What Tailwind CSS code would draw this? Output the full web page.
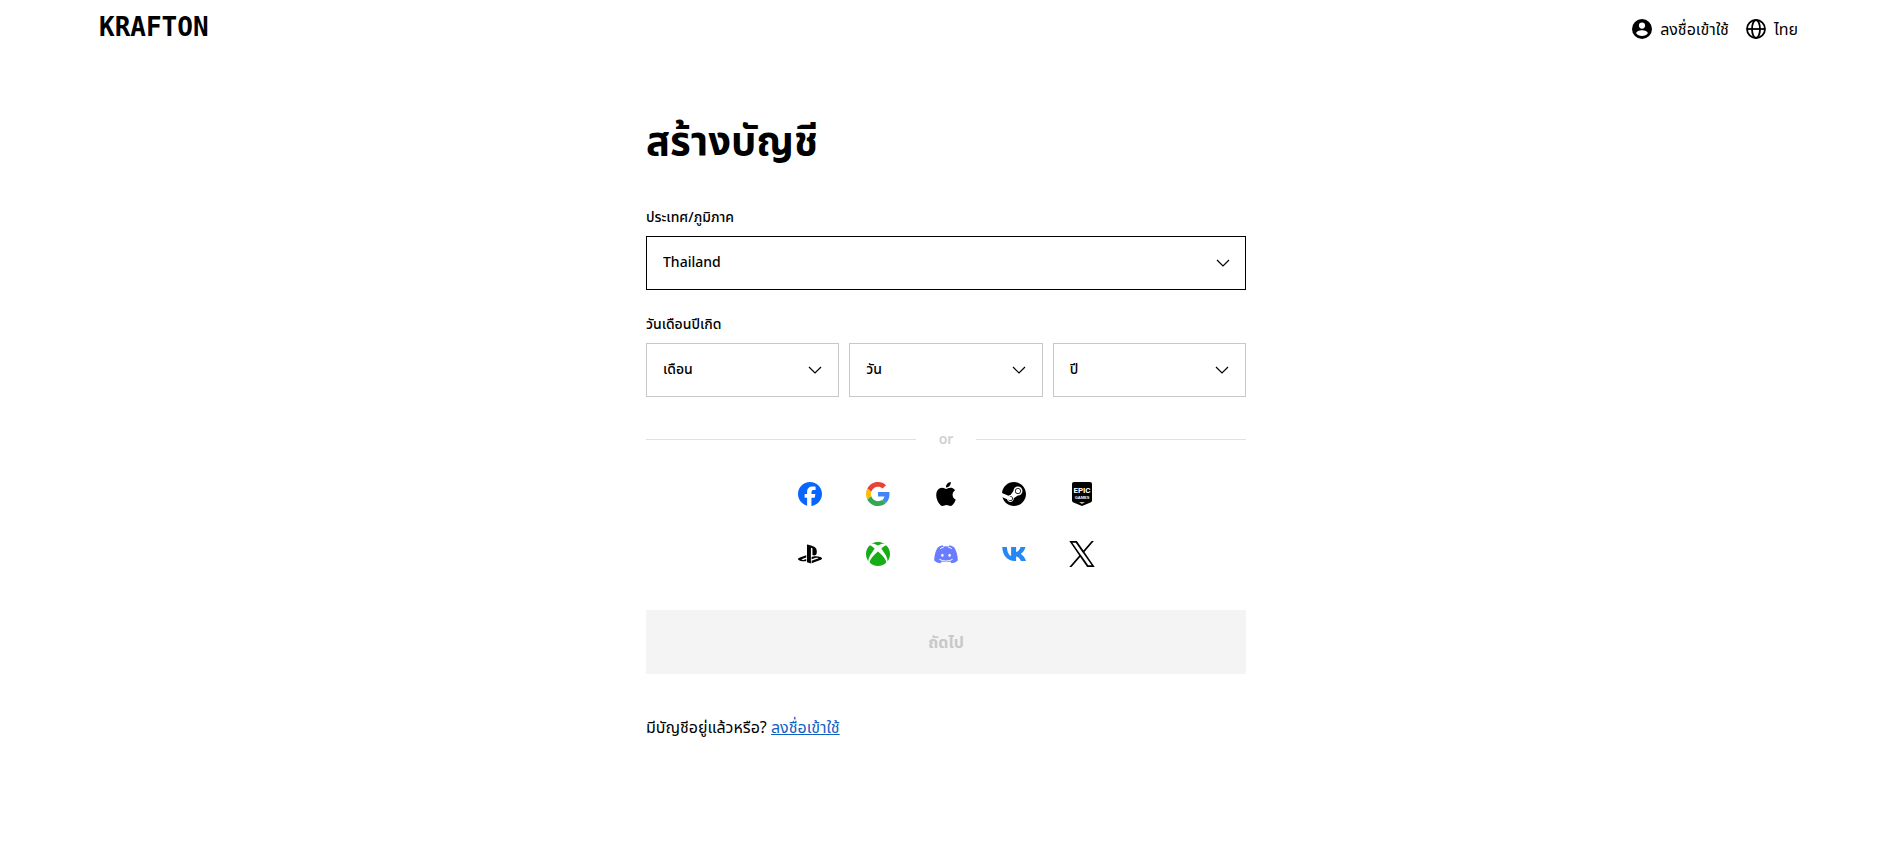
<!DOCTYPE html>
<html lang="th">
<head>
    <meta charset="UTF-8">
    <meta name="viewport" content="width=device-width, initial-scale=1.0">
    <title>KRAFTON</title>
    <script src="https://cdn.jsdelivr.net/npm/@tailwindcss/browser@4"></script>
</head>
<body class="bg-white pr-px text-black font-['Noto_Sans','Noto_Sans_Thai',sans-serif]">
    <!-- header -->
    <header class="flex items-center justify-between h-[58px] pl-[99px] pr-[94px]">
        <a href="#" class="mb-1 text-[26px] leading-8 font-bold font-['DejaVu_Sans_Mono',monospace]">KRAFTON</a>
        <nav class="flex items-center gap-[17px] text-base">
            <a href="#" class="flex items-center gap-2">
                <svg class="w-5 h-5" viewBox="0 0 20 20" fill="none">
                    <circle cx="10" cy="10" r="10" fill="#000"/>
                    <circle cx="10" cy="6.6" r="3.1" fill="#fff"/>
                    <path d="M4.2 14.2c0-2.1 3.2-3 5.8-3s5.8.9 5.8 3c-1.2 1.8-3.3 2.8-5.8 2.8s-4.6-1-5.8-2.8z" fill="#fff"/>
                </svg>
                <span>ลงชื่อเข้าใช้</span>
            </a>
            <button class="flex items-center gap-2">
                <svg class="w-5 h-5" viewBox="0 0 20 20" fill="none" stroke="#000" stroke-width="1.8">
                    <circle cx="10" cy="10" r="9"/>
                    <ellipse cx="10" cy="10" rx="4" ry="9"/>
                    <path d="M1 10h18"/>
                </svg>
                <span>ไทย</span>
            </button>
        </nav>
    </header>

    <!-- create account form -->
    <main class="w-full max-w-[600px] mx-auto pt-[52px]">
        <h1 class="text-[40px] leading-[60px] font-bold">สร้างบัญชี</h1>
        <form>
            <label for="country" class="block mt-[37px] text-sm leading-5 font-medium">ประเทศ/ภูมิภาค</label>
            <div class="relative mt-[9px]">
                <select id="country" class="appearance-none w-full h-[54px] px-4 pb-0.5 border border-black bg-white text-sm font-medium">
                    <option>Thailand</option>
                </select>
                <svg class="absolute right-4 top-5 w-3.5 h-3.5 pointer-events-none" viewBox="0 0 14 14" fill="none" stroke="#000" stroke-width="1.2"><path d="M1 4l6 6 6-6"/></svg>
            </div>

            <fieldset class="mt-6">
                <legend class="text-sm leading-5 font-medium">วันเดือนปีเกิด</legend>
                <div class="grid grid-cols-3 gap-2.5 mt-[9px]">
                    <div class="relative">
                        <select aria-label="เดือน" class="appearance-none w-full h-[54px] px-4 pb-0.5 border border-[#c8c8c8] bg-white text-sm font-medium">
                            <option>เดือน</option>
                        </select>
                        <svg class="absolute right-[17px] top-5 w-3.5 h-3.5 pointer-events-none" viewBox="0 0 14 14" fill="none" stroke="#000" stroke-width="1.2"><path d="M1 4l6 6 6-6"/></svg>
                    </div>
                    <div class="relative">
                        <select aria-label="วัน" class="appearance-none w-full h-[54px] px-4 pb-0.5 border border-[#c8c8c8] bg-white text-sm font-medium">
                            <option>วัน</option>
                        </select>
                        <svg class="absolute right-[17px] top-5 w-3.5 h-3.5 pointer-events-none" viewBox="0 0 14 14" fill="none" stroke="#000" stroke-width="1.2"><path d="M1 4l6 6 6-6"/></svg>
                    </div>
                    <div class="relative">
                        <select aria-label="ปี" class="appearance-none w-full h-[54px] px-4 pb-0.5 border border-[#c8c8c8] bg-white text-sm font-medium">
                            <option>ปี</option>
                        </select>
                        <svg class="absolute right-[17px] top-5 w-3.5 h-3.5 pointer-events-none" viewBox="0 0 14 14" fill="none" stroke="#000" stroke-width="1.2"><path d="M1 4l6 6 6-6"/></svg>
                    </div>
                </div>
            </fieldset>

            <div class="flex items-center mt-8 text-sm leading-5 font-semibold text-[#d0d0d0]">
                <div class="flex-1 h-px bg-[#e1e1e1]"></div>
                <span class="w-[60px] text-center">or</span>
                <div class="flex-1 h-px bg-[#e1e1e1]"></div>
            </div>

            <!-- social logins -->
            <div class="grid grid-cols-[repeat(5,24px)] auto-rows-[24px] justify-center gap-x-11 gap-y-9 mt-[33px]">
                <button type="button" aria-label="Facebook">
                    <svg class="w-6 h-6" viewBox="0 0 24 24" fill="#0866ff"><path d="M9.101 23.691v-7.98H6.627v-3.667h2.474v-1.58c0-4.085 1.848-5.978 5.858-5.978.401 0 .955.042 1.468.103a8.68 8.68 0 0 1 1.141.195v3.325a8.623 8.623 0 0 0-.653-.036 26.805 26.805 0 0 0-.733-.009c-.707 0-1.259.096-1.675.309a1.686 1.686 0 0 0-.679.622c-.258.42-.374.995-.374 1.752v1.297h3.919l-.386 2.103-.287 1.564h-3.246v8.245C19.396 23.238 24 18.179 24 12.044c0-6.627-5.373-12-12-12s-12 5.373-12 12c0 5.628 3.874 10.35 9.101 11.647Z"/></svg>
                </button>
                <button type="button" aria-label="Google">
                    <svg class="w-6 h-6" viewBox="0 0 48 48">
                        <path fill="#EA4335" d="M24 9.5c3.54 0 6.71 1.22 9.21 3.6l6.85-6.85C35.9 2.38 30.47 0 24 0 14.62 0 6.51 5.38 2.56 13.22l7.98 6.19C12.43 13.72 17.74 9.5 24 9.5z"/>
                        <path fill="#4285F4" d="M46.98 24.55c0-1.57-.15-3.09-.38-4.55H24v9.02h12.94c-.58 2.96-2.26 5.48-4.78 7.18l7.73 6c4.51-4.18 7.09-10.36 7.09-17.65z"/>
                        <path fill="#FBBC05" d="M10.53 28.59c-.48-1.45-.76-2.99-.76-4.59s.27-3.14.76-4.59l-7.98-6.19C.92 16.46 0 20.12 0 24c0 3.88.92 7.54 2.56 10.78l7.97-6.19z"/>
                        <path fill="#34A853" d="M24 48c6.48 0 11.93-2.13 15.89-5.81l-7.73-6c-2.15 1.45-4.92 2.3-8.16 2.3-6.26 0-11.57-4.22-13.47-9.91l-7.98 6.19C6.51 42.62 14.62 48 24 48z"/>
                    </svg>
                </button>
                <button type="button" aria-label="Apple">
                    <svg class="w-6 h-6" viewBox="0 0 24 24"><path d="M12.152 6.896c-.948 0-2.415-1.078-3.96-1.04-2.04.027-3.91 1.183-4.961 3.014-2.117 3.675-.546 9.103 1.519 12.09 1.013 1.454 2.208 3.09 3.792 3.039 1.52-.065 2.09-.987 3.935-.987 1.831 0 2.35.987 3.96.948 1.637-.026 2.676-1.48 3.676-2.948 1.156-1.688 1.636-3.325 1.662-3.415-.039-.013-3.182-1.221-3.22-4.857-.026-3.04 2.48-4.494 2.597-4.559-1.429-2.09-3.623-2.324-4.39-2.376-2-.156-3.675 1.09-4.61 1.09zM15.53 3.83c.843-1.012 1.4-2.427 1.245-3.83-1.207.052-2.662.805-3.532 1.818-.78.896-1.454 2.338-1.273 3.714 1.338.104 2.715-.688 3.559-1.701"/></svg>
                </button>
                <button type="button" aria-label="Steam">
                    <svg class="w-6 h-6" viewBox="0 0 24 24"><path d="M11.979 0C5.678 0 .511 4.86.022 11.037l6.432 2.658c.545-.371 1.203-.59 1.912-.59.063 0 .125.004.188.006l2.861-4.142V8.91c0-2.495 2.028-4.524 4.524-4.524 2.494 0 4.524 2.031 4.524 4.527s-2.03 4.525-4.524 4.525h-.105l-4.076 2.911c0 .052.004.105.004.159 0 1.875-1.515 3.396-3.39 3.396-1.635 0-3.016-1.173-3.331-2.727L.436 15.27C1.862 20.307 6.486 24 11.979 24c6.627 0 11.999-5.373 11.999-12S18.605 0 11.979 0zM7.54 18.21l-1.473-.61c.262.543.714.999 1.314 1.25 1.297.539 2.793-.076 3.332-1.375.263-.63.264-1.319.005-1.949s-.75-1.121-1.377-1.383c-.624-.26-1.29-.249-1.878-.03l1.523.63c.956.4 1.409 1.5 1.009 2.455-.397.957-1.497 1.41-2.454 1.012H7.54zm11.415-9.303c0-1.662-1.353-3.015-3.015-3.015-1.665 0-3.015 1.353-3.015 3.015 0 1.665 1.35 3.015 3.015 3.015 1.663 0 3.015-1.35 3.015-3.015zm-5.273-.005c0-1.252 1.013-2.266 2.265-2.266 1.249 0 2.266 1.014 2.266 2.266 0 1.251-1.017 2.265-2.266 2.265-1.253 0-2.265-1.014-2.265-2.265z"/></svg>
                </button>
                <button type="button" aria-label="Epic Games">
                    <svg class="w-6 h-6" viewBox="0 0 24 24">
                        <path d="M4 0h16a2 2 0 0 1 2 2v16.5q0 1.5-1.5 2L12 24l-8.5-3.5Q2 20 2 18.5V2a2 2 0 0 1 2-2z"/>
                        <text x="12" y="11" text-anchor="middle" fill="#fff" font-family="Roboto, sans-serif" font-weight="bold" font-size="8">EPIC</text>
                        <text x="12" y="17" text-anchor="middle" fill="#fff" font-family="Liberation Sans, sans-serif" font-weight="bold" font-size="4">GAMES</text>
                        <path d="M9 20.3h6l-3 1.4z" fill="#fff"/>
                    </svg>
                </button>
                <button type="button" aria-label="PlayStation">
                    <svg class="w-6 h-6" viewBox="0 0 24 24"><path d="M8.984 2.596v17.547l3.915 1.261V6.688c0-.69.304-1.151.794-.991.636.18.76.814.76 1.505v5.875c2.441 1.193 4.362-.002 4.362-3.152 0-3.237-1.126-4.675-4.438-5.827-1.307-.448-3.728-1.186-5.39-1.502zm4.656 16.241l6.296-2.275c.715-.258.826-.625.246-.818-.586-.192-1.637-.139-2.357.123l-4.205 1.5V14.98l.24-.085s1.201-.42 2.913-.615c1.696-.18 3.785.03 5.437.661 1.848.601 2.04 1.472 1.576 2.072-.465.6-1.622 1.036-1.622 1.036l-8.544 3.107V18.86zM1.807 18.6c-1.9-.545-2.214-1.668-1.352-2.32.801-.586 2.16-1.052 2.16-1.052l5.615-2.013v2.313L4.205 17c-.705.271-.825.632-.239.826.586.195 1.637.15 2.343-.12L8.247 17v2.074c-.12.03-.256.044-.39.073-1.939.331-3.996.196-6.038-.479z"/></svg>
                </button>
                <button type="button" aria-label="Xbox">
                    <svg class="w-6 h-6" viewBox="0 0 24 24" fill="#16ad16"><path d="M4.102 21.033C6.211 22.881 8.977 24 12 24c3.026 0 5.789-1.119 7.902-2.967 1.877-1.912-4.316-8.709-7.902-11.417-3.582 2.708-9.779 9.505-7.898 11.417zm11.16-14.406c2.5 2.961 7.484 10.313 6.076 12.912C23.002 17.48 24 14.861 24 12.004c0-3.34-1.365-6.362-3.57-8.536 0 0-.027-.022-.082-.042-.063-.022-.152-.045-.281-.045-.592 0-1.985.434-4.805 3.246zM3.654 3.426c-.057.02-.082.041-.086.042C1.365 5.642 0 8.664 0 12.004c0 2.854.998 5.473 2.661 7.533-1.401-2.605 3.579-9.951 6.08-12.91-2.82-2.813-4.216-3.245-4.806-3.245-.131 0-.223.021-.281.046v-.002zM12 3.551S9.055 1.828 6.755 1.746c-.903-.033-1.454.295-1.521.339C7.379.646 9.659 0 11.984 0H12c2.334 0 4.605.646 6.766 2.085-.068-.046-.615-.372-1.52-.339C14.946 1.828 12 3.545 12 3.545v.006z"/></svg>
                </button>
                <button type="button" aria-label="Discord">
                    <svg class="w-6 h-6" viewBox="0 0 24 24">
                        <path fill="#6a7cff" d="M20.3 5.4Q18 3.6 15.4 3.2l-.6 1.2q-2.8-.4-5.6 0L8.6 3.2Q6 3.6 3.7 5.4.2 10.8.2 18.6 2.5 21.1 6.5 21.3l1.3-1.7q4.2 1 8.4 0l1.3 1.7q4-.2 6.3-2.7 0-7.8-3.5-13.2z"/>
                        <path d="M5.4 17.4q6.6 3.3 13.2 0M6.2 6.7Q7.8 5.6 9.6 5.3M17.8 6.7Q16.2 5.6 14.4 5.3" fill="none" stroke="#fff" stroke-width="1"/>
                        <ellipse cx="8.4" cy="13.2" rx="1.2" ry="1.5" fill="#fff"/>
                        <ellipse cx="15.6" cy="13.2" rx="1.2" ry="1.5" fill="#fff"/>
                    </svg>
                </button>
                <button type="button" aria-label="VK">
                    <svg class="w-6 h-6" viewBox="0 0 24 24"><path fill="#2787f5" d="M12.8 19C5.6 19 .6 13.7.2 5h4.7c.3 5.6 2.3 8.4 4.2 9V5h5v5.1c1.9-.3 3.7-2.5 4.5-5.1h4.9c-.7 3.2-2.9 5.7-4.7 6.9 1.8.9 4.2 3.2 5.2 7.1h-5.1c-.8-2.5-2.5-4.2-4.8-4.600V19z"/></svg>
                </button>
                <button type="button" aria-label="X" class="flex items-center justify-center">
                    <svg class="w-[26px] h-[26px] shrink-0" viewBox="0 0 1200 1227"><path d="M714.163 519.284L1160.89 0H1055.03L667.137 450.887L357.328 0H0L468.492 681.821L0 1226.37H105.866L515.491 750.218L842.672 1226.37H1200L714.137 519.284H714.163ZM569.165 687.828L521.697 619.934L144.011 79.6944H306.615L611.412 515.685L658.88 583.579L1055.08 1150.3H892.476L569.165 687.854V687.828Z"/></svg>
                </button>
            </div>

            <button type="submit" disabled class="block w-full h-16 mt-11 bg-[#f4f4f4] text-base font-bold text-[#c8c8c8]">ถัดไป</button>
        </form>

        <p class="mt-[41px] text-base">มีบัญชีอยู่แล้วหรือ? <a href="#" class="text-[#1161bf] underline">ลงชื่อเข้าใช้</a></p>
    </main>
</body>
</html>
